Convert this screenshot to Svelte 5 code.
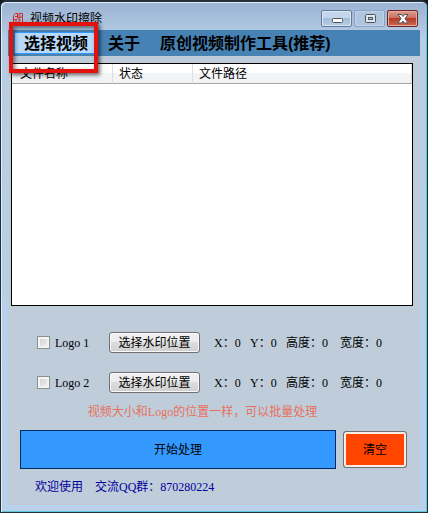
<script lang="ts">
  type Region = {
    id: number;
    enabled: boolean;
    x: number;
    y: number;
    height: number;
    width: number;
  };

  const menu = ['选择视频', '关于', '原创视频制作工具(推荐)'];
  const columns = ['文件名称', '状态', '文件路径'];

  let activeIndex = $state(0);
  let regions = $state<Region[]>([
    { id: 1, enabled: false, x: 0, y: 0, height: 0, width: 0 },
    { id: 2, enabled: false, x: 0, y: 0, height: 0, width: 0 },
  ]);
</script>

<div class="window">
  <header class="titlebar">
    <svg class="titlebar__icon" viewBox="0 0 12 12" aria-hidden="true">
      <path d="M5.500 1.500H3.500L1.500 3.500v7H4V7.500H2M3 4.500h2.500v2L4 8M5.500 1v4M7 1.500h3.500v9H9M7 1.500v9M7 5.500h2v-2M7 8h2" />
    </svg>
    <h1>视频水印擦除</h1>
    <div class="titlebar__controls">
      <button type="button" class="control" aria-label="最小化">
        <svg viewBox="0 0 12 12"><rect x="1.500" y="5.500" width="10" height="4" rx="1" /></svg>
      </button>
      <button type="button" class="control control--dim" aria-label="最大化">
        <svg viewBox="0 0 12 12">
          <rect x="1.500" y="1.500" width="10" height="8" rx="1" />
          <rect class="hole" x="4.500" y="4.500" width="4" height="2" />
        </svg>
      </button>
      <button type="button" class="control control--close" aria-label="关闭">
        <svg viewBox="0 0 12 12">
          <path d="M1 1.500h3.500L6 3.500l1.500-2H11L8 5.500l3 4.500H7.500L6 8l-1.500 2H1l3-4.500z" />
        </svg>
      </button>
    </div>
  </header>

  <main class="client">
    <nav class="menu">
      {#each menu as label, index}
        <button
          type="button"
          class="menu__item"
          class:menu__item--active={index === activeIndex}
          onclick={() => (activeIndex = index)}
        >
          {label}
        </button>
      {/each}
      <span class="marker" aria-hidden="true"></span>
    </nav>

    <div class="files">
      <table>
        <thead>
          <tr>
            {#each columns as column}
              <th scope="col">{column}</th>
            {/each}
          </tr>
        </thead>
        <tbody></tbody>
      </table>
    </div>

    <div class="regions">
      {#each regions as region (region.id)}
        <div class="region">
          <label class="region__toggle">
            <input type="checkbox" bind:checked={region.enabled} />
            Logo {region.id}
          </label>
          <button type="button" class="region__pick">选择水印位置</button>
          <div class="region__values">
            <span>X：{region.x}</span>
            <span>Y：{region.y}</span>
            <span>高度：{region.height}</span>
            <span>宽度：{region.width}</span>
          </div>
        </div>
      {/each}
    </div>

    <p class="hint">视频大小和Logo的位置一样，可以批量处理</p>

    <div class="actions">
      <button type="button" class="actions__start">开始处理</button>
      <button type="button" class="actions__clear">清空</button>
    </div>

    <footer class="footer">
      <span>欢迎使用</span>
      <span>交流QQ群：870280224</span>
    </footer>
  </main>
</div>

<style>
  :global(body) {
    margin: 0;
    background: #10161c;
  }

  .window {
    display: flex;
    flex-direction: column;
    box-sizing: border-box;
    min-height: 100vh;
    padding: 0 7px 7px;
    border: 1px solid #23303b;
    border-top-width: 2px;
    border-radius: 6px 6px 0 0;
    background: linear-gradient(#9ab3d2, #b7cde6 36px, #b9d1ea);
    box-shadow: inset 1px 1px #e0ecf7, inset -1px -1px #5bc8dc;
    color: #000;
    font-family: 'Liberation Serif', 'Noto Sans CJK SC', serif;
    font-size: 12px;
    line-height: 18px;
  }

  button {
    margin: 0;
    padding: 0;
    color: inherit;
    font: inherit;
    white-space: nowrap;
  }

  .titlebar {
    display: flex;
    align-items: center;
    height: 28px;
    padding: 0 2px 0 4px;
  }

  .titlebar__icon {
    width: 12px;
    height: 12px;
    margin-top: 4px;
    fill: none;
    stroke: #d42c2c;
  }

  h1 {
    flex: 1;
    margin: 6px 0 0 6px;
    font-size: 12px;
    font-weight: 400;
    line-height: 18px;
  }

  .titlebar__controls {
    display: flex;
    gap: 2px;
    margin-top: 5px;
  }

  .control {
    display: grid;
    place-items: center;
    box-sizing: border-box;
    width: 31px;
    height: 17px;
    border: 1px solid #61799a;
    border-radius: 2px;
    background: linear-gradient(#c5d6ea 45%, #a4bcd8 50%, #b9cee6);
    box-shadow: inset 0 0 0 1px #d9e6f3;
  }

  .control svg {
    width: 12px;
    height: 12px;
    fill: #fff;
    stroke: #4d545e;
  }

  .control--dim {
    border-color: #8ba3c2;
    background: #b0c6e0;
    box-shadow: inset 0 0 0 1px #c1d4e8;
  }

  .control--dim svg {
    fill: #dfe6ee;
  }

  .control .hole {
    fill: #b0c6e0;
  }

  .control--close {
    border-color: #6b2626;
    background: linear-gradient(#dda093, #cc6e5f 45%, #b63a28 50%, #cb6a50);
    box-shadow: inset 0 0 0 1px #e3aaa0;
  }

  .client {
    display: flex;
    flex: 1;
    flex-direction: column;
    background: #bfcddb;
  }

  .menu {
    position: relative;
    display: flex;
    align-items: center;
    height: 26px;
    padding-left: 6px;
    background: #4682b4;
  }

  .menu__item {
    height: 22px;
    padding: 1px 9px 0;
    border: 1px solid transparent;
    background: transparent;
    font-family: 'Liberation Sans', 'Noto Sans CJK SC', sans-serif;
    font-size: 16px;
    font-weight: 700;
    line-height: 20px;
  }

  .menu__item--active {
    border-color: #3399ff;
    background: #b7d9fa;
  }

  .marker {
    position: absolute;
    top: -8px;
    left: 1px;
    box-sizing: border-box;
    width: 89px;
    height: 51px;
    border: 4px solid #e3120f;
    box-shadow: 2px 2px 4px rgba(0, 0, 0, 0.6), inset 2px 2px 4px rgba(0, 0, 0, 0.5);
    pointer-events: none;
  }

  .files {
    flex: 1;
    min-height: 120px;
    margin: 7px 7px 0 3px;
    border: 1px solid #000;
    background: #fff;
  }

  table {
    width: 100%;
    border-collapse: separate;
    border-spacing: 0;
    table-layout: fixed;
  }

  th {
    box-sizing: border-box;
    height: 20px;
    padding: 1px 0 0 6px;
    border-right: 1px solid #dcdfe3;
    border-bottom: 1px solid #a5a5a5;
    background: linear-gradient(#fff 45%, #f3f4f6 50%, #f1f2f4);
    font-weight: 400;
    line-height: 18px;
    text-align: left;
  }

  th:first-child {
    width: 101px;
    padding-left: 8px;
  }

  th:nth-child(2) {
    width: 80px;
  }

  .regions {
    display: flex;
    flex-direction: column;
    gap: 19px;
    padding: 26px 12px 0 29px;
  }

  .region {
    display: flex;
    align-items: center;
    height: 21px;
  }

  .region__toggle {
    display: flex;
    align-items: center;
    gap: 5px;
    width: 72px;
  }

  .region__toggle input {
    appearance: none;
    box-sizing: border-box;
    width: 13px;
    height: 13px;
    margin: 0;
    border: 1px solid #8e8f8f;
    background: linear-gradient(135deg, #c5cad0, #f6f6f6);
    box-shadow: inset 0 0 0 2px #f4f4f4;
  }

  .region__toggle input:checked {
    background: #31588f;
  }

  .region__pick {
    box-sizing: border-box;
    width: 91px;
    height: 21px;
    border: 1px solid #707070;
    border-radius: 3px;
    background: linear-gradient(#f2f2f2, #ebebeb 49%, #dddddd 50%, #cfcfcf);
    box-shadow: inset 0 0 0 1px #fafafa;
    line-height: 18px;
  }

  .region__values {
    display: grid;
    grid-template-columns: 24px 24px 42px 42px;
    gap: 12px;
    margin-left: 14px;
    white-space: nowrap;
  }

  .hint {
    margin: 10px 23px 0 0;
    color: #e8705c;
    text-align: center;
  }

  .actions {
    display: flex;
    align-items: center;
    gap: 7px;
    margin: 9px 13px 0 12px;
  }

  .actions__start {
    flex: 1;
    height: 39px;
    border: 1px solid #002b60;
    background: #3399ff;
  }

  .actions__clear {
    box-sizing: border-box;
    width: 64px;
    height: 37px;
    border: 1px solid #707070;
    border-radius: 3px;
    background: #ff4500;
    box-shadow: inset 0 0 0 2px #fbeee8;
  }

  .footer {
    display: flex;
    gap: 12px;
    padding: 9px 27px;
    color: #00009c;
  }
</style>
